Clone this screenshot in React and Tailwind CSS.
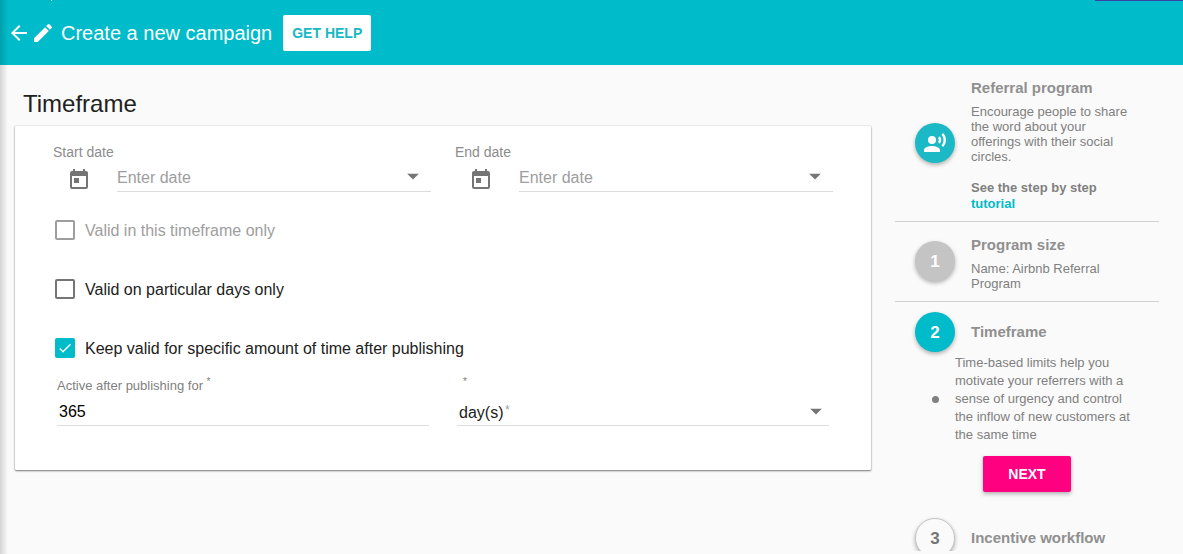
import { useState } from 'react';
import { MdArrowBack, MdArrowDropDown, MdCheck, MdEdit, MdRecordVoiceOver } from 'react-icons/md';

function CalendarIcon({ className = '' }) {
  return (
    <svg viewBox="0 0 24 24" fill="currentColor" aria-hidden="true" className={className}>
      <path d="M19 4h-1V2h-2v2H8V2H6v2H5a2 2 0 0 0-2 2v14a2 2 0 0 0 2 2h14a2 2 0 0 0 2-2V6a2 2 0 0 0-2-2zm0 16H5V9h14v11zM7 11h5v5H7z" />
    </svg>
  );
}

function Header() {
  return (
    <header className="relative flex h-[65px] shrink-0 items-center bg-[#00bbc9] pl-[7px] pt-px text-white">
      <span className="absolute left-[51px] top-0 h-px w-px bg-white" />
      <span className="absolute right-0 top-0 h-px w-[88px] bg-[#3f3fa8]" />
      <button type="button" aria-label="Back">
        <MdArrowBack className="size-6" />
      </button>
      <MdEdit className="size-6" />
      <h1 className="ml-[6px] text-[20px] leading-6">Create a new campaign</h1>
      <button
        type="button"
        className="ml-[11px] h-9 w-[88px] rounded-[2px] bg-white text-[14px] font-bold text-[#17b8c4]"
      >
        GET HELP
      </button>
    </header>
  );
}

function DateField({ id, label }) {
  return (
    <div>
      <label htmlFor={id} className="block text-[14px] leading-4 text-[#8c8c8c]">
        {label}
      </label>
      <div className="flex pl-[14px]">
        <CalendarIcon className="mt-[7px] size-6 shrink-0 text-[#757575]" />
        <div className="relative ml-[26px] flex-1">
          <input
            id={id}
            type="text"
            placeholder="Enter date"
            className="block h-8 w-full border-b border-[#dcdcdc] pt-1 text-[16px] outline-none placeholder:text-[#9e9e9e]"
          />
          <MdArrowDropDown className="pointer-events-none absolute right-1 top-[2px] size-7 text-[#757575]" />
        </div>
      </div>
    </div>
  );
}

function Checkbox({ label, disabled = false, defaultChecked = false }) {
  const [checked, setChecked] = useState(defaultChecked);
  return (
    <label
      className={`relative flex w-fit items-start gap-[10px] text-[16px] leading-5 ${
        disabled ? 'text-[#9e9e9e]' : 'text-[#212121]'
      }`}
    >
      <input
        type="checkbox"
        checked={checked}
        disabled={disabled}
        onChange={(e) => setChecked(e.target.checked)}
        className="size-5 appearance-none rounded-[2px] border-2 border-[#757575] checked:border-[#00bbc9] checked:bg-[#00bbc9] disabled:border-[#9e9e9e]"
      />
      {checked && (
        <MdCheck className="pointer-events-none absolute left-[2px] top-[2px] size-4 text-white" />
      )}
      <span className="pt-px">{label}</span>
    </label>
  );
}

function TimeframeCard() {
  return (
    <form className="mt-2 rounded-[1px] bg-white px-[38px] pb-11 pt-[18px] shadow-[0_1px_2px_rgba(0,0,0,0.5),0_0_1px_rgba(0,0,0,0.4)]">
      <div className="grid grid-cols-2 gap-6">
        <DateField id="start-date" label="Start date" />
        <DateField id="end-date" label="End date" />
      </div>
      <div className="mt-7 flex flex-col gap-[38px] pl-[2px]">
        <Checkbox label="Valid in this timeframe only" disabled />
        <Checkbox label="Valid on particular days only" />
        <Checkbox label="Keep valid for specific amount of time after publishing" defaultChecked />
      </div>
      <div className="mt-[19px] grid grid-cols-2 gap-7 px-1">
        <div>
          <label htmlFor="active-for" className="block text-[13px] leading-4 text-[#808080]">
            Active after publishing for <sup className="text-[10px]">*</sup>
          </label>
          <input
            id="active-for"
            type="text"
            defaultValue="365"
            className="block h-8 w-full border-b border-[#dcdcdc] px-[2px] pt-1 text-[16px] text-black outline-none"
          />
        </div>
        <div>
          <label htmlFor="active-unit" className="block pl-[6px] text-[13px] leading-4 text-[#808080]">
            <sup className="text-[10px]">*</sup>
          </label>
          <div className="relative">
            <select
              id="active-unit"
              className="block h-8 w-full appearance-none border-b border-[#dcdcdc] px-[2px] pt-[6px] text-[16px] text-[#212121] outline-none"
            >
              <option>day(s)</option>
              <option>week(s)</option>
              <option>month(s)</option>
            </select>
            <span className="pointer-events-none absolute left-12 top-2 text-[12px] leading-4 text-[#9e9e9e]">*</span>
            <MdArrowDropDown className="pointer-events-none absolute -right-px top-[3px] size-7 text-[#757575]" />
          </div>
        </div>
      </div>
    </form>
  );
}

function Badge({ className, children }) {
  return (
    <div
      className={`flex size-10 shrink-0 items-center justify-center rounded-full text-[17px] font-bold shadow-[0_2px_4px_rgba(0,0,0,0.3)] ${className}`}
    >
      {children}
    </div>
  );
}

function StepTitle({ children }) {
  return <h3 className="text-[15px] font-bold leading-5 text-[#909090]">{children}</h3>;
}

function Sidebar() {
  return (
    <aside className="mb-[3px] w-[264px] shrink-0 overflow-hidden text-[13px] leading-[15px] text-[#808080]">
      <section className="flex items-center gap-4 border-b border-[#d0d0d0] px-5 py-[9px]">
        <Badge className="bg-[#1bb9c5] text-white">
          <MdRecordVoiceOver className="size-6" />
        </Badge>
        <div className="pt-1">
          <StepTitle>Referral program</StepTitle>
          <p className="mt-[6px]">
            Encourage people to share the word about your offerings with their social circles.
          </p>
          <p className="mt-4 font-bold leading-4">
            See the step by step{' '}
            <a href="#tutorial" className="text-[#00bbc9]">
              tutorial
            </a>
          </p>
        </div>
      </section>

      <section className="flex items-center gap-4 border-b border-[#d0d0d0] px-5 pb-[10px] pt-[9px]">
        <Badge className="bg-[#c4c4c4] text-white">1</Badge>
        <div className="pt-1">
          <StepTitle>Program size</StepTitle>
          <p className="mt-[6px]">Name: Airbnb Referral Program</p>
        </div>
      </section>

      <section className="px-5 pt-[10px]">
        <div className="flex items-center gap-4">
          <Badge className="bg-[#00bbc9] text-white">2</Badge>
          <StepTitle>Timeframe</StepTitle>
        </div>
        <div className="mt-[2px] flex items-center">
          <div className="flex w-10 shrink-0 justify-center">
            <span className="size-[7px] rounded-full bg-[#808080]" />
          </div>
          <p className="leading-[18px]">
            Time-based limits help you motivate your referrers with a sense of urgency and control the
            inflow of new customers at the same time
          </p>
        </div>
        <div className="mt-3 flex justify-center">
          <button
            type="button"
            className="h-9 w-[88px] rounded-[2px] bg-[#ff0080] text-[14px] font-bold text-white shadow-[0_2px_4px_rgba(0,0,0,0.3)]"
          >
            NEXT
          </button>
        </div>
        <div className="mt-[26px] flex items-center gap-4">
          <Badge className="border border-[#c4c4c4] bg-[#fafafa] text-[#757575]">3</Badge>
          <StepTitle>Incentive workflow</StepTitle>
        </div>
      </section>
    </aside>
  );
}

export default function App() {
  return (
    <div className="relative flex h-screen flex-col overflow-hidden bg-[#fafafa] font-['Liberation_Sans',Arial,sans-serif]">
      <Header />
      <div className="flex min-h-0 flex-1 gap-6 pl-[15px] pr-6">
        <main className="min-w-0 flex-1 pt-[25px]">
          <h2 className="pl-2 text-[24px] leading-7 text-[#212121]">Timeframe</h2>
          <TimeframeCard />
        </main>
        <Sidebar />
      </div>
      <div className="pointer-events-none absolute inset-y-0 left-0 w-2 bg-linear-to-r from-black/15 to-transparent" />
    </div>
  );
}
